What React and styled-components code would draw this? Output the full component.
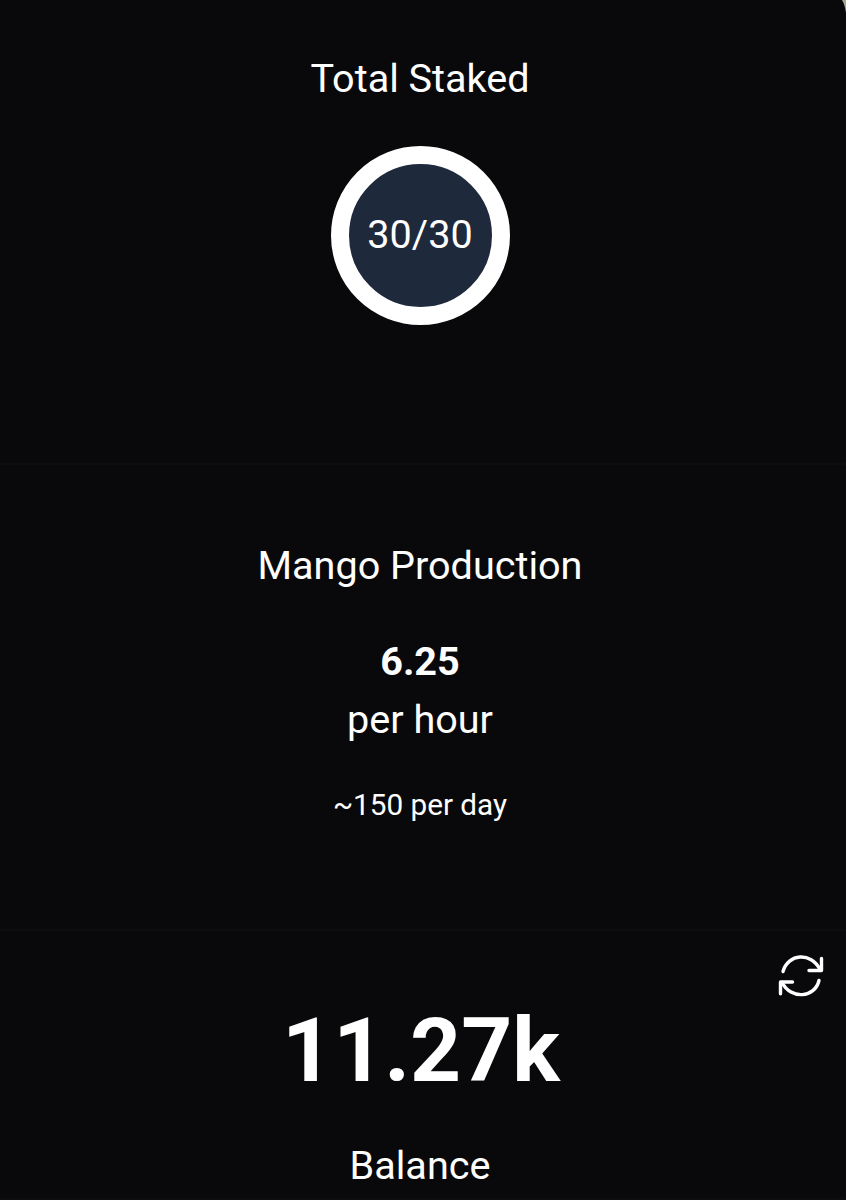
import styled, {createGlobalStyle} from "styled-components";

const GlobalStyle = createGlobalStyle`
  * {
    box-sizing: border-box;
  }
  body {
    margin: 0;
    background-color: #09090b;
  }
`
const Container = styled.div`
  position: relative;
  width: 100%;
  height: 1200px;
  overflow: hidden;
  background-color: #09090b;
  color: white;
  font-family: Roboto, sans-serif;
`
const Corner = styled.svg`
  position: absolute;
  top: 0;
  right: 0;
  width: 5px;
  height: 14px;
`
const Section = styled.section`
  display: flex;
  flex-direction: column;
  align-items: center;
  height: ${(props) => props.$height}px;
  padding-top: ${(props) => props.$top}px;
  padding-right: 6px;
  border-bottom: 2px solid #0d0d0f;
`
const Title = styled.h2`
  margin: 0;
  font-size: 39.6px;
  line-height: 59px;
  font-weight: 400;
`
const Ring = styled.div`
  display: flex;
  align-items: center;
  justify-content: center;
  width: 179px;
  height: 179px;
  margin-top: 38px;
  padding-bottom: 2px;
  border: 18px solid white;
  border-radius: 50%;
  background-color: #1e293b;
  font-size: 39.6px;
`
const Rate = styled.strong`
  margin-top: 37px;
  font-size: 39.6px;
  line-height: 60px;
  font-weight: 700;
`
const Period = styled.span`
  margin-top: -2px;
  font-size: 39.6px;
  line-height: 59px;
`
const Daily = styled.span`
  margin-top: 31px;
  font-size: 29.7px;
  line-height: 50px;
`
const Toolbar = styled.div`
  display: flex;
  justify-content: flex-end;
  align-self: stretch;
  height: 47px;
  padding-right: 16px;
`
const RefreshButton = styled.button`
  width: 46px;
  height: 44px;
  padding: 0;
  border: none;
  background: none;
  color: white;
  cursor: pointer;

  svg {
    display: block;
  }
`
const Amount = styled.strong`
  padding-left: 2px;
  font-size: 89.1px;
  line-height: 99px;
  font-weight: 700;
`
const Label = styled.span`
  margin-top: 36px;
  font-size: 39.6px;
  line-height: 59px;
`

const RefreshIcon = () => (
    <svg width="46" height="44" viewBox="0 0 46 44" fill="none" stroke="currentColor" strokeWidth="3.4" strokeLinecap="round" strokeLinejoin="round">
        <path d="M5 17.500C10 -0.500 33 -2.500 42 15.500"/>
        <path d="M43.500 4.500V16.500H31"/>
        <path d="M41 26.500C37 44 13 46 4 28.500"/>
        <path d="M2.500 39.800V28H14.500"/>
    </svg>
)

const App = () => {
    return(
        <Container>
            <GlobalStyle/>
            <Section $height={465} $top={49}>
                <Title>Total Staked</Title>
                <Ring>30/30</Ring>
            </Section>
            <Section $height={466} $top={71}>
                <Title>Mango Production</Title>
                <Rate>6.25</Rate>
                <Period>per hour</Period>
                <Daily>~150 per day</Daily>
            </Section>
            <Section $height={269} $top={23}>
                <Toolbar>
                    <RefreshButton aria-label="Refresh"><RefreshIcon/></RefreshButton>
                </Toolbar>
                <Amount>11.27k</Amount>
                <Label>Balance</Label>
            </Section>
            <Corner viewBox="0 0 5 14">
                <path d="M1 0H5V13Q4 5 1 0Z" fill="#a3a98c"/>
            </Corner>
        </Container>
    )
}

export default App
